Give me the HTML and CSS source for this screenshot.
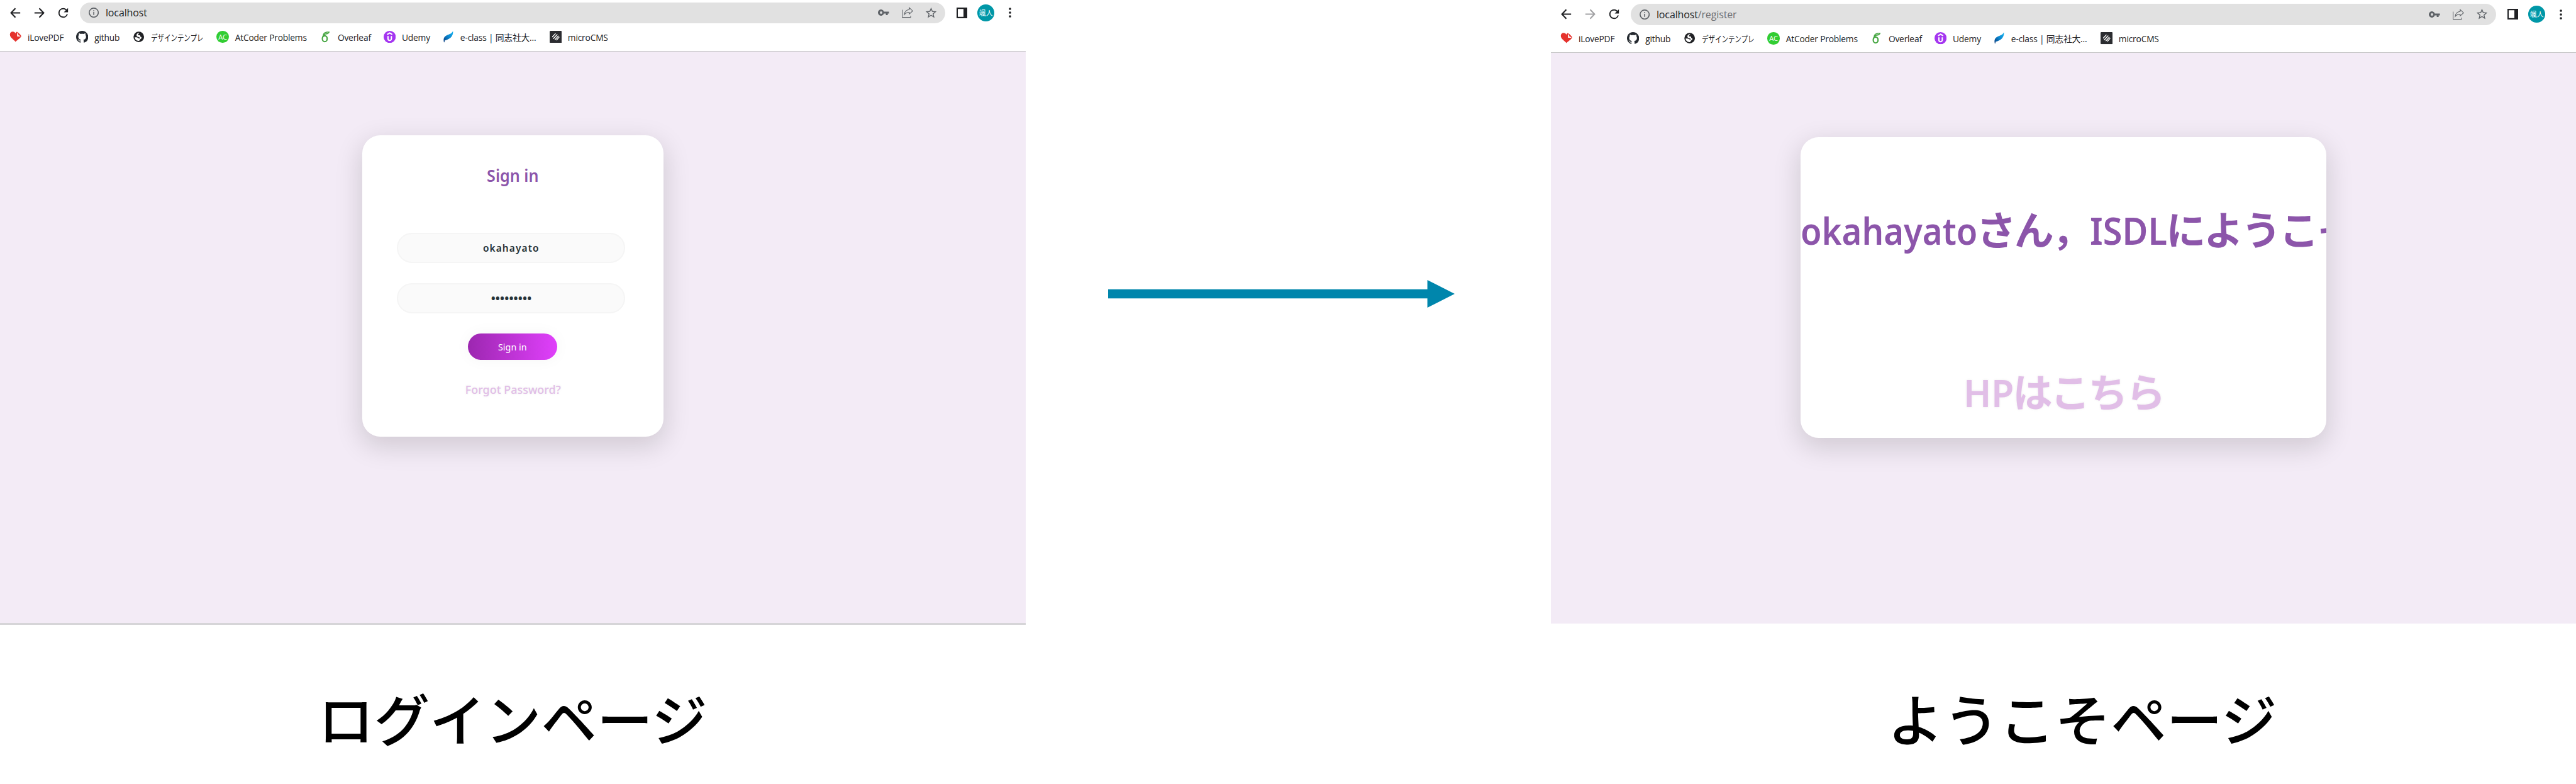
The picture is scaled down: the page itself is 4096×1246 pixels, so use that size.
FILE: index.html
```html
<!DOCTYPE html>
<html lang="ja">
<head>
<meta charset="utf-8">
<title>ログインページ / ようこそページ</title>
<link rel="stylesheet" href="styles.css">
</head>
<body>
<svg class="defs" aria-hidden="true">
  <symbol id="back" viewBox="0 0 24 24"><path d="M20 12H5M12 4.5 4.8 12 12 19.500" fill="none" stroke="currentColor" stroke-width="2.200"/></symbol>
  <symbol id="forward" viewBox="0 0 24 24"><path d="M4 12h15M12 4.500 19.200 12 12 19.500" fill="none" stroke="currentColor" stroke-width="2.200"/></symbol>
  <symbol id="reload" viewBox="0 0 24 24"><path d="M17.650 6.350A7.960 7.960 0 0 0 12 4a8 8 0 1 0 7.730 10h-2.080A6 6 0 1 1 12 6c1.660 0 3.140.690 4.220 1.780L13 11h7V4z" fill="currentColor"/></symbol>
  <symbol id="info" viewBox="0 0 24 24"><circle cx="12" cy="12" r="10.700" fill="none" stroke="currentColor" stroke-width="2.400"/><path d="M10.800 10.500h2.400v7h-2.400zM10.800 6.300h2.400v2.500h-2.400z" fill="currentColor"/></symbol>
  <symbol id="key" viewBox="0 0 18 18"><path fill-rule="evenodd" fill="currentColor" d="M9.500 7.500A4.900 4.900 0 1 0 9.500 10.500H12.600V13H15.600V10.500H17.600V7.500ZM5 7.100a1.900 1.900 0 1 1 0 3.800a1.900 1.900 0 1 1 0-3.800z"/></symbol>
  <symbol id="share" viewBox="0 0 18 18"><path d="M.6 4.600V16.600H14V14M4 12.300C4.400 7.500 7.500 4.600 11.800 4.300V1.200L17.200 6.400 11.800 11.400V8.500C8.300 8.500 6 9.700 4 12.300Z" fill="none" stroke="currentColor" stroke-width="1.050"/></symbol>
  <symbol id="star" viewBox="0 0 24 24"><path fill="currentColor" d="M22 9.240l-7.190-.620L12 2 9.190 8.630 2 9.240l5.460 4.730L5.820 21 12 17.270 18.180 21l-1.630-7.030L22 9.240zM12 15.400l-3.760 2.270 1-4.280-3.320-2.880 4.380-.380L12 6.100l1.710 4.040 4.380.380-3.320 2.880 1 4.280L12 15.400z"/></symbol>
  <symbol id="panel" viewBox="0 0 17 17"><path fill="currentColor" fill-rule="evenodd" d="M0 0h17v17H0zM2 2.300v12.400h9V2.300z"/></symbol>
  <symbol id="dots" viewBox="0 0 4 16"><g fill="currentColor"><circle cx="2" cy="2" r="1.850"/><circle cx="2" cy="8" r="1.850"/><circle cx="2" cy="14" r="1.850"/></g></symbol>
  <symbol id="b-pdf" viewBox="0 0 20 20"><path fill="#e5322d" d="M10.200 18.200C7.500 14.700.8 11.300.8 6.200.8 3.200 2.900 1.300 5.400 1.300c2 0 3.600 1 4.500 2.900.5-1 1-1.700 1.800-2.300L12.500 1.500 19.600 8.600C18.500 12.200 12.500 15 10.200 18.200z"/><path fill="#fff" d="M12.700 3v6.200h5.700z"/><path fill="#e5322d" d="M14 2.300l5.300 5.500-4.300-.4z"/></symbol>
  <symbol id="b-git" viewBox="0 0 16 16"><path fill="#24292f" fill-rule="evenodd" d="M8 0C3.580 0 0 3.580 0 8c0 3.540 2.290 6.530 5.470 7.590.400.070.550-.170.550-.380 0-.190-.010-.820-.010-1.490-2.010.370-2.530-.490-2.690-.940-.090-.230-.480-.940-.820-1.130-.280-.150-.680-.520-.010-.530.630-.010 1.080.580 1.230.820.720 1.210 1.870.870 2.330.660.070-.520.280-.870.510-1.070-1.780-.200-3.640-.890-3.640-3.950 0-.870.310-1.590.820-2.150-.080-.200-.360-1.020.080-2.120 0 0 .670-.210 2.200.820.640-.180 1.320-.270 2-.270s1.360.090 2 .270c1.530-1.040 2.200-.820 2.200-.820.440 1.100.160 1.920.080 2.120.510.560.820 1.270.820 2.150 0 3.070-1.870 3.750-3.650 3.950.290.250.540.730.540 1.480 0 1.070-.010 1.930-.010 2.200 0 .210.150.460.550.380A8.010 8.010 0 0 0 16 8c0-4.420-3.580-8-8-8z"/></symbol>
  <symbol id="b-globe" viewBox="0 0 20 20"><circle cx="10" cy="10" r="8.700" fill="#202124"/><path fill="#fff" d="M11 3.200c-.5 1.500-1.600 1.600-2 2.500-.6 1.300.8 1.700 2.100 1.600 1.500-.1 1.700 1.500 1.200 2.400 1.500-.2 2.600 1 2.200 2.200-.4 1.300-2.200 1.500-2.700 2.800-.3.800-.7 1.500-1.700 1.800-3.600.2-6.500-2.500-6.800-5.800h3.200c1 0 1.700 1 2.700 1 .9 0 1.200.7.700 1.500.8 0 1.600-.7 1.700-1.600.1-1.100-1-1.500-2-1.600-2-.1-3.600-.9-3.300-3.200.2-1.800 1.900-3.400 4.700-3.600z"/></symbol>
  <symbol id="b-leaf" viewBox="0 0 20 20"><g fill="none" stroke="#46a642"><ellipse cx="8.700" cy="13" rx="4" ry="4.900" stroke-width="2.200"/><path d="M5 11.500C5.500 8 7 6 10 4.800" stroke-width="1.800"/></g><path fill="#46a642" d="M5.500 7C6.500 2.500 10 1 17 1.500 15.500 5.500 12 6.200 8.500 5.700 7.300 5.600 6.200 6.500 5.500 7z"/><path d="M8.500 4.500 14 2.700" stroke="#fff" stroke-width=".6"/></symbol>
  <symbol id="b-udemy" viewBox="0 0 20 20"><circle cx="10" cy="10" r="10" fill="#a435f0"/><path d="M5.800 6 10 3.500 14.200 6M7.200 8.500v4.500c0 3.700 5.600 3.700 5.600 0V8.500" fill="none" stroke="#fff" stroke-width="2.100"/></symbol>
  <symbol id="b-feather" viewBox="0 0 20 20"><defs><linearGradient id="fg" x1="1" y1="0" x2="0" y2="1"><stop offset="0" stop-color="#19b5f1"/><stop offset=".5" stop-color="#0a86cf"/><stop offset="1" stop-color="#0b3a7c"/></linearGradient></defs><path fill="url(#fg)" d="M17.800.2C19 6.500 15 13.500 4.500 15.700L3.700 19H3C1.500 12 3.500 9.500 8 7.200 12.500 5 16 4.500 17.800.2z"/></symbol>
  <symbol id="b-cms" viewBox="0 0 20 20"><rect width="20" height="20" rx="1.500" fill="#2b2c30"/><path d="M4.800 9.700 9.300 4.800M6.300 12.600 12.300 6.200M9 14.300 14.200 8.600M11.500 15 15.500 10.500" stroke="#fff" stroke-width="1.500" stroke-linecap="round"/></symbol>
</svg>

<main class="slide">
  <section class="stage stage-login">
    <div class="window">
      <header class="toolbar">
        <nav class="nav"><svg><use href="#back"/></svg><svg><use href="#forward"/></svg><svg><use href="#reload"/></svg></nav>
        <div class="omnibox">
          <svg class="i-info"><use href="#info"/></svg><span class="url">localhost</span>
          <svg class="i-key"><use href="#key"/></svg><svg class="i-share"><use href="#share"/></svg><svg class="i-star"><use href="#star"/></svg>
        </div>
        <svg class="i-panel"><use href="#panel"/></svg><span class="avatar">颯人</span><svg class="i-dots"><use href="#dots"/></svg>
      </header>
      <div class="bookmarks">
        <a><svg><use href="#b-pdf"/></svg><span>iLovePDF</span></a>
        <a><svg><use href="#b-git"/></svg><span>github</span></a>
        <a><svg><use href="#b-globe"/></svg><span class="narrow">デザインテンプレ</span></a>
        <a><i class="ac">AC</i><span>AtCoder Problems</span></a>
        <a><svg><use href="#b-leaf"/></svg><span>Overleaf</span></a>
        <a><svg><use href="#b-udemy"/></svg><span>Udemy</span></a>
        <a><svg><use href="#b-feather"/></svg><span>e-class | 同志社大...</span></a>
        <a><svg><use href="#b-cms"/></svg><span>microCMS</span></a>
      </div>
      <div class="page">
        <form class="card card-login">
          <h1 class="sign">Sign in</h1>
          <div class="field"><span>okahayato</span></div>
          <div class="field password"><span>•••••••••</span></div>
          <button class="submit" type="button"><span>Sign in</span></button>
          <a class="forgot">Forgot Password?</a>
        </form>
      </div>
    </div>
    <h2 class="caption">ログインページ</h2>
  </section>

  <svg class="arrow" viewBox="0 0 551 44"><path fill="#0086ac" d="M0 14.800H507.600V0L551 22 507.600 44V29.300H0z"/></svg>

  <section class="stage stage-welcome">
    <div class="window">
      <header class="toolbar">
        <nav class="nav"><svg><use href="#back"/></svg><svg class="off"><use href="#forward"/></svg><svg><use href="#reload"/></svg></nav>
        <div class="omnibox">
          <svg class="i-info"><use href="#info"/></svg><span class="url">localhost<span class="path">/register</span></span>
          <svg class="i-key"><use href="#key"/></svg><svg class="i-share"><use href="#share"/></svg><svg class="i-star"><use href="#star"/></svg>
        </div>
        <svg class="i-panel"><use href="#panel"/></svg><span class="avatar">颯人</span><svg class="i-dots"><use href="#dots"/></svg>
      </header>
      <div class="bookmarks">
        <a><svg><use href="#b-pdf"/></svg><span>iLovePDF</span></a>
        <a><svg><use href="#b-git"/></svg><span>github</span></a>
        <a><svg><use href="#b-globe"/></svg><span class="narrow">デザインテンプレ</span></a>
        <a><i class="ac">AC</i><span>AtCoder Problems</span></a>
        <a><svg><use href="#b-leaf"/></svg><span>Overleaf</span></a>
        <a><svg><use href="#b-udemy"/></svg><span>Udemy</span></a>
        <a><svg><use href="#b-feather"/></svg><span>e-class | 同志社大...</span></a>
        <a><svg><use href="#b-cms"/></svg><span>microCMS</span></a>
      </div>
      <div class="page">
        <div class="card card-welcome">
          <p class="hello"><span class="latin user">okahayato</span>さん，<span class="latin isdl">ISDL</span>にようこそ</p>
          <a class="home"><span class="latin hp">HP</span>はこちら</a>
        </div>
      </div>
    </div>
    <h2 class="caption">ようこそページ</h2>
  </section>
</main>
</body>
</html>
```

FILE: styles.css
```css
* { box-sizing: border-box; }
body {
  margin: 0;
  background: #fff;
  color: #202124;
  font-family: "Open Sans", "Noto Sans CJK JP", sans-serif;
  overflow: hidden;
}
svg { display: block; flex: none; }
.defs { position: absolute; width: 0; height: 0; }

.slide {
  display: grid;
  grid-template-columns: 1630.5px 1fr 1630px;
  height: 1246px;
}
.stage { display: flex; flex-direction: column; min-width: 0; }
.window { display: flex; flex-direction: column; height: 993px; }
.stage-login .window { border-bottom: 3px solid #d6d5d8; }
.stage-welcome .window { height: 991.300px; padding-top: 2.5px; }

/* browser toolbar */
.toolbar {
  display: flex;
  align-items: center;
  height: 40.500px;
  padding-left: 12.900px;
}
.nav { display: flex; gap: 15.300px; width: 114.500px; color: #202124; }
.nav svg { width: 23px; height: 23px; }
.nav .off { color: #a3a3a5; }
.omnibox {
  display: flex;
  align-items: center;
  width: 1375.600px;
  height: 33.500px;
  padding-left: 13.600px;
  border-radius: 17px;
  background: #e1e1e1;
  color: #5f6368;
}
.i-info { width: 16.200px; height: 16.200px; }
.url {
  width: 1228px;
  margin-left: 10.800px;
  color: #202124;
  font-size: 16px;
  letter-spacing: -.14px;
  line-height: 22px;
}
.path { color: #6d6f73; }
.i-key { width: 18px; height: 18px; }
.i-share { width: 18px; height: 18px; margin-left: 20px; }
.i-star { width: 21px; height: 21px; margin-left: 18px; }
.i-panel { width: 17px; height: 17px; margin-left: 18.200px; }
.avatar {
  width: 26.600px;
  height: 26.600px;
  margin-left: 16.200px;
  border-radius: 50%;
  background: #0097a7;
  color: #fff;
  font: 10.800px/26px "Noto Sans CJK JP", sans-serif;
  text-align: center;
}
.i-dots { width: 4px; height: 16px; margin-left: 23px; }

/* bookmarks bar */
.bookmarks {
  display: grid;
  grid-template-columns: 106.300px 90px 133.500px 163.200px 102.100px 92.900px 171px 1fr;
  align-items: center;
  height: 41px;
  padding: 0 0 4px 14.600px;
  border-bottom: 1.500px solid #c6c6c8;
}
.bookmarks a {
  display: flex;
  align-items: center;
  gap: 10px;
  font-size: 13.800px;
  line-height: 19px;
  letter-spacing: -.2px;
  white-space: nowrap;
}
.bookmarks span { padding-top: 1px; }
.bookmarks svg, .ac { width: 19.300px; height: 19.300px; }
.ac {
  flex: none;
  border-radius: 50%;
  background: #32cd32;
  color: #fff;
  font: 11px/19px "Open Sans", sans-serif;
  text-align: center;
}
.narrow { transform: scaleX(.77); transform-origin: 0 50%; }

/* page content */
.page {
  display: flex;
  flex: 1;
  justify-content: center;
  align-items: flex-start;
  padding-top: 133.500px;
  background: #f3ebf6;
}
.card {
  display: flex;
  flex-direction: column;
  align-items: center;
  height: 478.500px;
  border-radius: 28.700px;
  background: #fff;
  box-shadow: 0 13px 42px 2.400px rgba(0, 0, 0, .14);
}
.card-login { width: 478.700px; font-family: "Noto Sans", sans-serif; }
.sign {
  margin: 45.500px 0 0;
  color: #8c55aa;
  font-size: 27px;
  font-weight: 600;
  line-height: 36px;
  transform: scaleX(.93);
}
.field {
  width: 363px;
  height: 48px;
  margin: 73.800px 5px 0 0;
  border: 2.400px solid #f5f5f5;
  border-radius: 24px;
  background: #fafafa;
  color: #263238;
  font-size: 16.800px;
  font-weight: 600;
  letter-spacing: 1.200px;
  line-height: 44px;
  text-align: center;
}
.field span { display: inline-block; transform: scaleX(.92); }
.password { margin-top: 32.200px; font-size: 20px; letter-spacing: -.340px; }
.password span { transform: none; }
.submit {
  width: 142.300px;
  height: 41.700px;
  margin-top: 31.800px;
  padding: 0;
  border: 0;
  border-radius: 21px;
  background: linear-gradient(to right, #9c27b0, #e040fb);
  box-shadow: 0 0 24px 1px rgba(0, 0, 0, .04);
  color: #fff;
  font: 15px/41px "Noto Sans", sans-serif;
}
.submit span { display: inline-block; transform: scaleX(.96); }
.forgot {
  margin-top: 34.400px;
  color: #e1bee7;
  font-size: 18.600px;
  font-weight: 500;
  line-height: 26px;
  text-shadow: 0 0 3.600px rgba(117, 117, 117, .12);
  transform: scaleX(.965);
}

.card-welcome {
  width: 836px;
  overflow: hidden;
  font-family: "Noto Sans CJK JP", sans-serif;
  font-size: 63px;
  font-weight: 700;
  letter-spacing: -3px;
  line-height: 90px;
  white-space: nowrap;
}
.hello { align-self: flex-start; margin: 99.500px 0 0; color: #8c55aa; }
.home { margin-top: 163.700px; color: #e1bee7; text-shadow: 0 0 3.600px rgba(117, 117, 117, .12); }
/* condensed latin runs; the negative margin gives back the width the scale takes away */
.latin {
  display: inline-block;
  font-family: "Noto Sans", sans-serif;
  font-size: 60px;
  font-weight: 600;
  letter-spacing: 0;
  transform-origin: 0 50%;
}
.user { margin-right: -30.300px; transform: scaleX(.907); }
.isdl { margin-right: -10.500px; transform: scaleX(.932); }
.hp { margin-right: -3.400px; transform: scaleX(.977); }

/* link between the two stages */
.arrow { width: 551px; height: 44px; margin: 445px 0 0 131.500px; }

.caption {
  margin: 82.500px 0 0;
  color: #000;
  font: 500 88.700px/128px "Noto Sans CJK JP", sans-serif;
  text-align: center;
}
.stage-welcome .caption { margin: 84.700px -60px 0 0; }
```
